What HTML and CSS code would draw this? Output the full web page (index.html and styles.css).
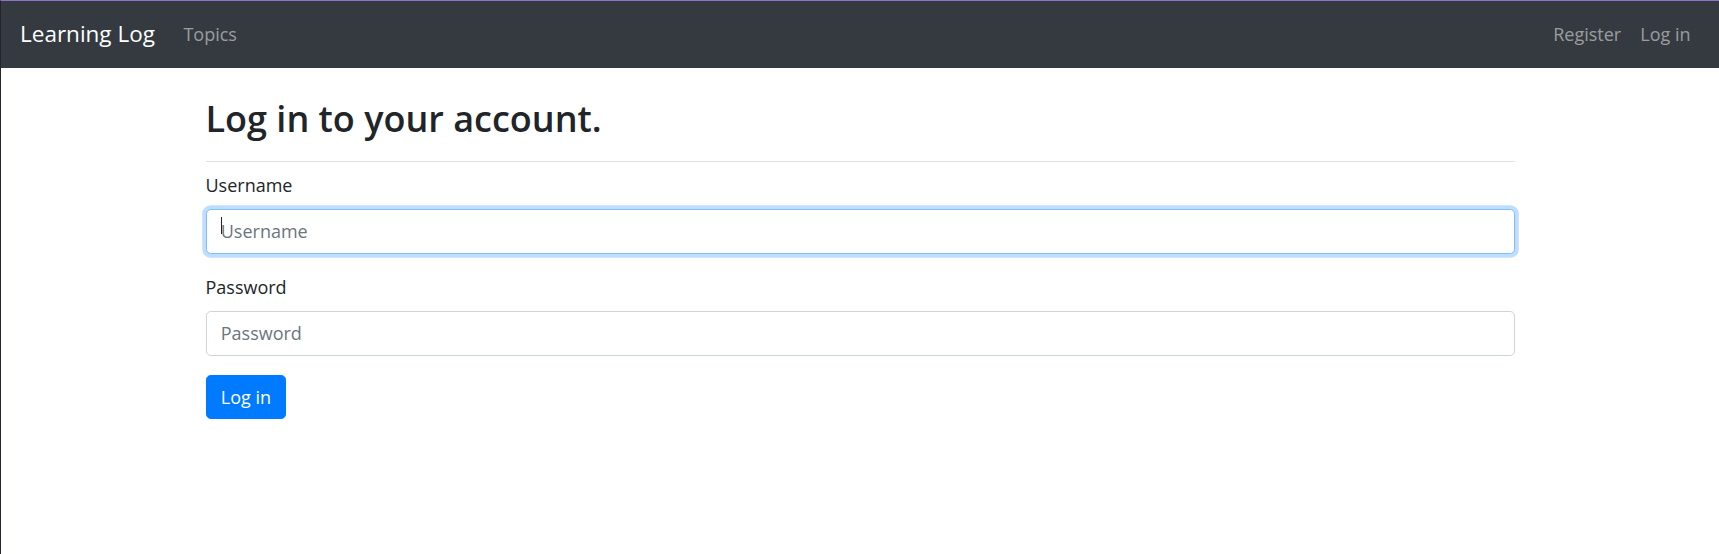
FILE: index.html
```html
<!DOCTYPE html>
<html lang="en">
<head>
<meta charset="utf-8">
<title>Learning Log</title>
<link rel="stylesheet" href="styles.css">
</head>
<body>
<nav class="navbar">
  <a class="brand" href="#">Learning Log</a>
  <ul class="nav-list">
    <li><a class="nav-link" href="#">Topics</a></li>
  </ul>
  <ul class="nav-list nav-right">
    <li><a class="nav-link" href="#">Register</a></li>
    <li><a class="nav-link" href="#">Log in</a></li>
  </ul>
</nav>
<main class="container">
  <div class="page-header">
    <h2 class="title">Log in to your account.</h2>
  </div>
  <form class="login-form">
    <div class="form-group">
      <label class="form-label" for="id_username">Username</label>
      <div class="input-wrap">
        <input class="form-control is-focused" id="id_username" type="text" placeholder="Username">
        <span class="caret"></span>
      </div>
    </div>
    <div class="form-group">
      <label class="form-label" for="id_password">Password</label>
      <input class="form-control" id="id_password" type="password" placeholder="Password">
    </div>
    <div class="form-group">
      <button class="btn-primary" type="button">Log in</button>
    </div>
  </form>
</main>
</body>
</html>
```

FILE: styles.css
```css
html { font-size: 19px; }
* { box-sizing: border-box; }
body {
  margin: 0;
  min-height: 554px;
  font-family: "Open Sans", "Noto Sans", sans-serif;
  font-size: 18px;
  line-height: 28.5px;
  color: #212529;
  background: #fff;
  border-top: 1px solid #8b73c9;
  border-left: 1px solid #2a2030;
}
a { text-decoration: none; }

.navbar {
  display: flex;
  align-items: center;
  background: #343a40;
  padding: 0 1rem;
  height: 66.5px;
}
.brand {
  color: #fff;
  font-size: 22.5px;
  line-height: 35.6px;
  padding: 0.3125rem 0;
  margin-right: 1rem;
  white-space: nowrap;
}
.nav-list {
  display: flex;
  list-style: none;
  margin: 0;
  padding: 0;
}
.nav-right { margin-left: auto; }
.nav-link {
  display: block;
  padding: 0.5rem 0.5rem;
  color: rgba(255, 255, 255, 0.5);
}

.container {
  width: 1309px;
  margin: 28.5px auto 0;
}
.page-header {
  padding-bottom: 0.5rem;
  margin-bottom: 0.5rem;
  border-bottom: 1px solid #dee2e6;
}
.title {
  margin: 0 0 0.5rem;
  font-size: 36px;
  font-weight: 600;
  line-height: 45.6px;
}

.form-group { margin-bottom: 1rem; }
.form-label {
  display: inline-block;
  margin-bottom: 0.5rem;
}
.input-wrap { position: relative; }
.form-control {
  display: block;
  width: 100%;
  height: 44.75px;
  padding: 0.375rem 0.75rem;
  font-family: inherit;
  font-size: 18px;
  line-height: 28.5px;
  color: #495057;
  background: #fff;
  border: 1px solid #ced4da;
  border-radius: 0.25rem;
  outline: none;
}
.form-control::placeholder { color: #6c757d; opacity: 1; }
.form-control.is-focused {
  border-color: #80bdff;
  box-shadow: 0 0 0 0.2rem rgba(0, 123, 255, 0.25);
}
.caret {
  position: absolute;
  left: 15px;
  top: 8px;
  width: 1px;
  height: 17px;
  background: #212529;
}
.btn-primary {
  display: inline-block;
  font-family: inherit;
  font-size: 18px;
  line-height: 28.5px;
  height: 44.75px;
  padding: 0 0.75rem;
  color: #fff;
  background: #007bff;
  border: 1px solid #007bff;
  border-radius: 0.25rem;
}
```
